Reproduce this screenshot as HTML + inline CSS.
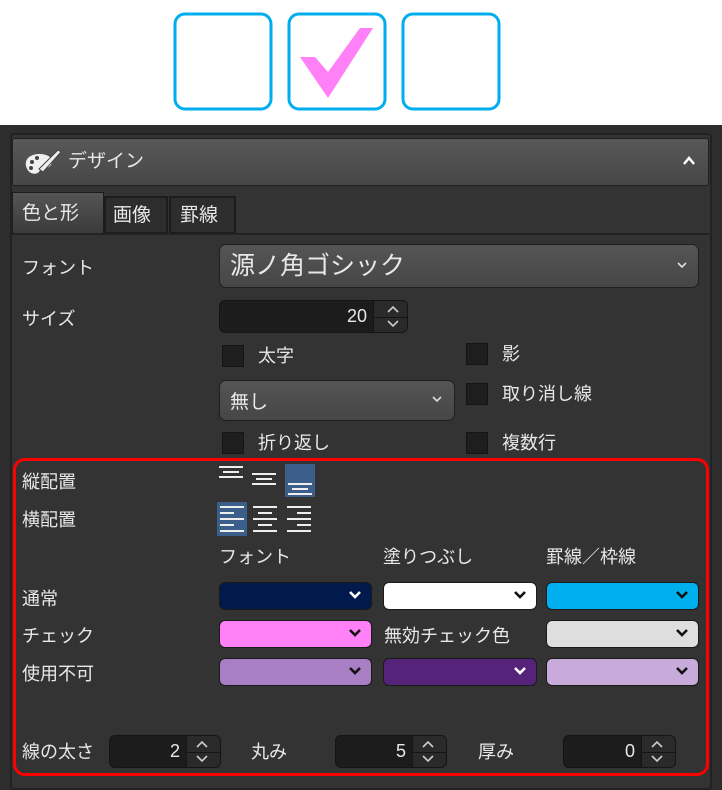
<!DOCTYPE html>
<html><head><meta charset="utf-8"><style>
*{margin:0;padding:0;box-sizing:border-box}
body{width:722px;height:790px;background:#fff;position:relative;overflow:hidden;font-family:"Liberation Sans","Noto Sans CJK JP",sans-serif;color:#e6e6e6}
.a{position:absolute}
.t{position:absolute;font-size:18px;line-height:22px;white-space:nowrap;color:#e8e8e8}
.cb{position:absolute;width:22px;height:22px;background:#1e1e1e;border:1px solid #151515}
.sp{position:absolute;height:33px;background:#1c1c1c;border:1px solid #151515;border-radius:6px;overflow:hidden}
.sp .v{position:absolute;right:40px;top:5px;font-size:18px;color:#e8e8e8}
.sp .b{position:absolute;right:0;top:0;width:34px;height:100%;background:#2a2a2a;border-left:1px solid #151515}
.sp .b:after{content:"";position:absolute;left:0;right:0;top:50%;border-top:1px solid #151515}
.dd{position:absolute;border-radius:6px;border:1px solid #1a1a1a;height:28px}
.ch{position:absolute;right:9px;top:7px}
.gray{background:linear-gradient(#555,#464646);border:1px solid #1f1f1f;border-radius:7px}
</style></head><body>
<!-- top checkboxes -->
<svg class="a" style="left:0;top:0" width="722" height="120">
<rect x="175" y="14" width="96" height="95" rx="10" fill="none" stroke="#00aeef" stroke-width="3"/>
<rect x="289" y="14" width="96" height="95" rx="10" fill="none" stroke="#00aeef" stroke-width="3"/>
<rect x="403" y="14" width="96" height="95" rx="10" fill="none" stroke="#00aeef" stroke-width="3"/>
<polygon points="300,57 315,57 328,72 360,28 373,28 328,98" fill="#ff80f7"/>
</svg>
<!-- panel -->
<div class="a" style="left:0;top:125px;width:722px;height:665px;background:#2d2d2d"></div>
<div class="a" style="left:10px;top:133px;width:702px;height:657px;background:#333;border:2px solid #222;border-radius:4px"></div>
<div class="a gray" style="left:12px;top:138px;width:697px;height:48px;border-radius:3px;background:linear-gradient(#585858,#474747)"></div>
<svg class="a" style="left:22px;top:146px" width="44" height="32" viewBox="0 0 44 32">
<path d="M4 20 C2 10 14 6 24 9 C30 11 32 16 28 20 C24 24 20 20 18 24 C16 30 6 29 4 20Z" fill="#f0f0f0"/>
<circle cx="10" cy="16" r="2" fill="#444"/><circle cx="15" cy="12" r="2" fill="#444"/><circle cx="9" cy="22" r="2" fill="#444"/>
<path d="M17 23 L36 4 L39 6 L21 26 Z" fill="#f0f0f0" stroke="#444" stroke-width="1"/>
</svg>
<div class="t" style="left:68px;top:151px;font-size:19px">デザイン</div>
<svg class="a" style="left:682px;top:155px" width="14" height="12"><path d="M2 9 L7 3 L12 9" fill="none" stroke="#fff" stroke-width="2.5"/></svg>
<!-- tabs -->
<div class="a" style="left:12px;top:192px;width:92px;height:42px;background:linear-gradient(#555,#3a3a3a);border:1px solid #1c1c1c;border-bottom:none"></div>
<div class="t" style="left:22px;top:203px;font-size:19px">色と形</div>
<div class="a" style="left:104px;top:196px;width:64px;height:38px;background:#2d2d2d;border:2px solid #1c1c1c"></div>
<div class="t" style="left:113px;top:205px;font-size:19px">画像</div>
<div class="a" style="left:169px;top:196px;width:67px;height:38px;background:#2d2d2d;border:2px solid #1c1c1c"></div>
<div class="t" style="left:180px;top:205px;font-size:19px">罫線</div>
<div class="a" style="left:12px;top:233px;width:697px;height:2px;background:#222"></div>
<!-- font row -->
<div class="t" style="left:22px;top:257px">フォント</div>
<div class="a gray" style="left:219px;top:244px;width:480px;height:44px"></div>
<div class="t" style="left:230px;top:252px;font-size:25px;line-height:28px">源ノ角ゴシック</div>
<svg class="a" style="left:677px;top:261px" width="10" height="8"><path d="M1 2 L5 6 L9 2" fill="none" stroke="#ddd" stroke-width="1.6"/></svg>
<div class="t" style="left:22px;top:308px">サイズ</div>
<div class="sp" style="left:219px;top:300px;width:189px"><span class="v">20</span><div class="b"></div></div>
<svg class="a" style="left:383px;top:302px" width="20" height="28"><path d="M5 10 L10 5 L15 10 M5 19 L10 24 L15 19" fill="none" stroke="#ccc" stroke-width="1.6"/></svg>
<!-- checkboxes -->
<div class="cb" style="left:222px;top:345px"></div><div class="t" style="left:258px;top:345px">太字</div>
<div class="cb" style="left:466px;top:343px"></div><div class="t" style="left:502px;top:343px">影</div>
<div class="a gray" style="left:219px;top:380px;width:236px;height:41px"></div>
<div class="t" style="left:230px;top:392px;font-size:19px">無し</div>
<svg class="a" style="left:432px;top:395px" width="10" height="8"><path d="M1 2 L5 6 L9 2" fill="none" stroke="#ddd" stroke-width="1.6"/></svg>
<div class="cb" style="left:466px;top:383px"></div><div class="t" style="left:502px;top:383px">取り消し線</div>
<div class="cb" style="left:222px;top:432px"></div><div class="t" style="left:258px;top:432px">折り返し</div>
<div class="cb" style="left:466px;top:432px"></div><div class="t" style="left:502px;top:432px">複数行</div>
<!-- red box -->
<div class="a" style="left:13px;top:458px;width:696px;height:318px;border:3px solid #f00;border-radius:12px"></div>
<div class="t" style="left:22px;top:471px">縦配置</div>
<div class="t" style="left:22px;top:509px">横配置</div>
<svg class="a" style="left:215px;top:462px" width="105" height="76">
<g stroke="#eee" stroke-width="2">
<path d="M4 5 H28 M8 10 H24 M4 15 H28"/>
<path d="M37 12 H61 M41 17 H57 M37 22 H61"/>
</g>
<rect x="70" y="2" width="30" height="33" fill="#3c5e8a"/>
<path d="M73 22 H97 M77 27 H93 M73 32 H97" stroke="#eee" stroke-width="2"/>
<rect x="2" y="40" width="30" height="34" fill="#3c5e8a"/>
<path d="M5 45 H29 M5 51 H19 M5 57 H29 M5 63 H19 M5 69 H29" stroke="#eee" stroke-width="2"/>
<path d="M38 45 H62 M43 51 H57 M38 57 H62 M43 63 H57 M38 69 H62" stroke="#eee" stroke-width="2"/>
<path d="M72 45 H96 M82 51 H96 M72 57 H96 M82 63 H96 M72 69 H96" stroke="#eee" stroke-width="2"/>
</svg>
<div class="t" style="left:219px;top:546px">フォント</div>
<div class="t" style="left:383px;top:546px">塗りつぶし</div>
<div class="t" style="left:546px;top:546px">罫線／枠線</div>
<div class="t" style="left:22px;top:588px">通常</div>
<div class="t" style="left:22px;top:625px">チェック</div>
<div class="t" style="left:22px;top:663px">使用不可</div>
<div class="t" style="left:384px;top:625px">無効チェック色</div>
<div class="dd" style="left:219px;top:582px;width:153px;background:#001a4d"><svg class="ch" width="14" height="10"><path d="M2 2 L7 7 L12 2" fill="none" stroke="#fff" stroke-width="2.6"/></svg></div>
<div class="dd" style="left:383px;top:582px;width:154px;background:#fff"><svg class="ch" width="14" height="10"><path d="M2 2 L7 7 L12 2" fill="none" stroke="#111" stroke-width="2.6"/></svg></div>
<div class="dd" style="left:546px;top:582px;width:153px;background:#00b0ee"><svg class="ch" width="14" height="10"><path d="M2 2 L7 7 L12 2" fill="none" stroke="#111" stroke-width="2.6"/></svg></div>
<div class="dd" style="left:219px;top:620px;width:153px;background:#ff80f7"><svg class="ch" width="14" height="10"><path d="M2 2 L7 7 L12 2" fill="none" stroke="#111" stroke-width="2.6"/></svg></div>
<div class="dd" style="left:546px;top:620px;width:153px;background:#dedede"><svg class="ch" width="14" height="10"><path d="M2 2 L7 7 L12 2" fill="none" stroke="#111" stroke-width="2.6"/></svg></div>
<div class="dd" style="left:219px;top:658px;width:153px;background:#a87fc4"><svg class="ch" width="14" height="10"><path d="M2 2 L7 7 L12 2" fill="none" stroke="#111" stroke-width="2.6"/></svg></div>
<div class="dd" style="left:383px;top:658px;width:154px;background:#55237a"><svg class="ch" width="14" height="10"><path d="M2 2 L7 7 L12 2" fill="none" stroke="#fff" stroke-width="2.6"/></svg></div>
<div class="dd" style="left:546px;top:658px;width:153px;background:#c9abdb"><svg class="ch" width="14" height="10"><path d="M2 2 L7 7 L12 2" fill="none" stroke="#111" stroke-width="2.6"/></svg></div>
<!-- bottom -->
<div class="t" style="left:22px;top:741px">線の太さ</div>
<div class="sp" style="left:109px;top:735px;width:112px"><span class="v">2</span><div class="b"></div></div>
<svg class="a" style="left:192px;top:737px" width="20" height="28"><path d="M5 10 L10 5 L15 10 M5 19 L10 24 L15 19" fill="none" stroke="#ccc" stroke-width="1.6"/></svg>
<div class="t" style="left:251px;top:741px">丸み</div>
<div class="sp" style="left:335px;top:735px;width:112px"><span class="v">5</span><div class="b"></div></div>
<svg class="a" style="left:418px;top:737px" width="20" height="28"><path d="M5 10 L10 5 L15 10 M5 19 L10 24 L15 19" fill="none" stroke="#ccc" stroke-width="1.6"/></svg>
<div class="t" style="left:478px;top:741px">厚み</div>
<div class="sp" style="left:563px;top:735px;width:113px"><span class="v">0</span><div class="b"></div></div>
<svg class="a" style="left:647px;top:737px" width="20" height="28"><path d="M5 10 L10 5 L15 10 M5 19 L10 24 L15 19" fill="none" stroke="#ccc" stroke-width="1.6"/></svg>
</body></html>
